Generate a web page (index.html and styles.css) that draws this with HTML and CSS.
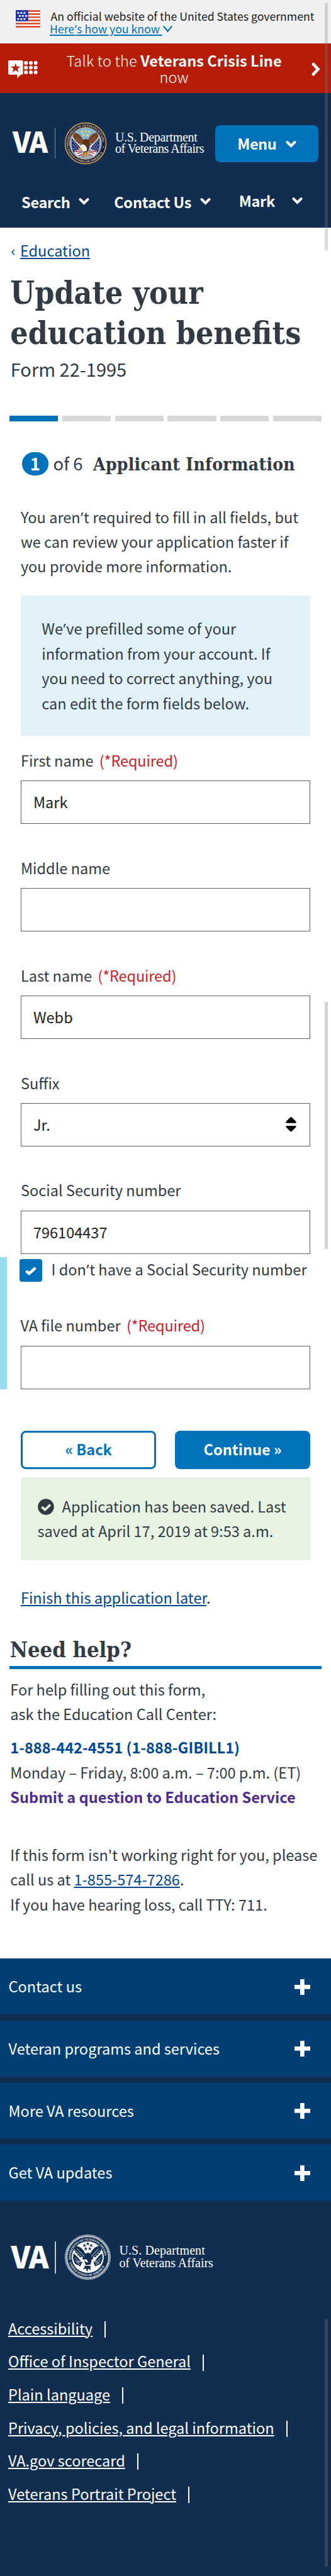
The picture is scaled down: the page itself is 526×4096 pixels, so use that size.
FILE: index.html
```
<!DOCTYPE html>
<html lang="en">
<head>
<meta charset="utf-8">
<title>Update your education benefits</title>
<link rel="stylesheet" href="styles.css">
</head>
<body>
<svg class="defs" width="0" height="0">
  <defs>
    <path id="arc-top" d="M-26.6 4A26.9 26.9 0 1 1 26.6 4"/>
    <path id="arc-bottom" d="M-29.2 9A30.6 30.6 0 0 0 29.2 9"/>
    <path id="star" d="M0-3L.7-1H2.9L1.1.3 1.8 2.4 0 1.1-1.8 2.4-1.1.3-2.9-1H-.7Z"/>
    <path id="wing" d="M-2-3C-5-6-6-12-12-15L-19-18-18-14-21-15-19-11-21-11-18-8-19-7-15-5-16-3-12-2-13 0-8 0-8 3-3 4Z"/>
    <symbol id="chevron" viewBox="0 0 17 12"><path d="M2.5 3L8.5 9L14.5 3" fill="none" stroke="currentColor" stroke-width="4" stroke-linecap="round"/></symbol>
  </defs>
</svg>

<div class="scroll scroll-a"></div>
<div class="scroll scroll-b"></div>
<div class="scroll scroll-c"></div>

<div class="gov">
  <svg class="flag" viewBox="0 0 40 28">
    <path fill="#fff" d="M0 0h40v28H0z"/>
    <path fill="#dc3e1f" d="M0 0h40v2.6H0zM0 5.1h40v2.5H0zM0 10.1h40v2.5H0zM0 15.2h40v2.5H0zM0 20.3h40v2.5H0zM0 25.4h40V28H0z"/>
    <path fill="#1e34b1" d="M0 0h20v17.8H0z"/>
    <path fill="#fff" d="M2.5 3h3v2.6h-3zM7.5 3h3v2.6h-3zM12.5 3h3v2.6h-3zM5 8h3v2.6H5zM10 8h3v2.6h-3zM15 8h3v2.6h-3zM2.5 12.9h3v2.6h-3zM7.5 12.9h3v2.6h-3zM12.5 12.9h3v2.6h-3z"/>
  </svg>
  <div>
    <div>An official website of the United States government</div>
    <a class="gov-link">Here<span class="apos">’</span>s how you know </a><svg class="gov-chev" viewBox="0 0 17 13"><path d="M1.2 1.5L8.5 10.5L15.8 1.5" fill="none" stroke="#0071bb" stroke-width="2.3"/></svg>
  </div>
</div>

<div class="crisis">
  <svg class="crisis-icon" viewBox="0 0 47 29">
    <path fill="#fff" d="M2 0H21.500Q23.500 0 23.500 2V20.500Q23.500 22.700 21.500 22.700H19.800L14.500 28.500V22.700H2Q0 22.700 0 20.500V2Q0 0 2 0Z"/>
    <path fill="#b51d09" d="M11.700 4.500L13.600 9.700H19.700L14.900 13.200 16.700 18.900 11.700 15.500 6.700 18.900 8.500 13.200 3.700 9.700H9.800Z"/>
    <g fill="#fff"><circle cx="28.200" cy="4" r="3"/><circle cx="36" cy="4" r="3"/><circle cx="43.700" cy="4" r="3"/><circle cx="28.200" cy="11.500" r="3"/><circle cx="36" cy="11.500" r="3"/><circle cx="43.700" cy="11.500" r="3"/><circle cx="28.200" cy="19" r="3"/><circle cx="36" cy="19" r="3"/><circle cx="43.700" cy="19" r="3"/></g>
  </svg>
  <p class="crisis-text"><span class="light">Talk to the</span> <b class="crisis-line">Veterans Crisis Line</b><br>now</p>
  <svg class="crisis-arrow" viewBox="0 0 14 22"><path d="M3 3L10.300 11L3 19" fill="none" stroke="#fff" stroke-width="4.800" stroke-linecap="round"/></svg>
</div>

<header class="header">
  <div class="brand-row">
    <span class="va">VA</span><span class="divider"></span>
    <svg class="seal" viewBox="-34 -34 68 68">
      <circle r="33.800" fill="#1c1d4a"/>
      <circle r="32.500" fill="none" stroke="#d8b75a" stroke-width="1.400"/>
      <circle r="25.300" fill="#80b3d6" stroke="#d8b75a" stroke-width="1"/>
      <g fill="#e8cf7c" class="seal-text">
        <text textLength="86" lengthAdjust="spacingAndGlyphs"><textPath href="#arc-top">DEPARTMENT OF VETERANS AFFAIRS</textPath></text>
        <text textLength="71" lengthAdjust="spacingAndGlyphs"><textPath href="#arc-bottom">UNITED STATES OF AMERICA</textPath></text>
      </g>
      <path fill="#2a2f68" d="M-22-9L-8 6-13 17-20 13-22 3ZM22-9L8 6 13 17 20 13 22 3Z"/>
      <path stroke="#d6dbea" stroke-width="1.300" stroke-dasharray="1.300 2" fill="none" d="M-20-4L-11 8M-20 2L-12 12M-19 8L-14 14M20-4L11 8M20 2L12 12M19 8L14 14"/>
      <path stroke="#eceff4" stroke-width="1.400" d="M-22-10L-7 7M22-10L7 7"/>
      <path fill="#fff" d="M-18 13L-8 9-5 17-12 22ZM18 13L8 9 5 17 12 22Z"/>
      <path stroke="#b5303c" stroke-width="1.600" fill="none" d="M-17 13L-6 12M-14 16L-6 14M-12 20L-5 17M17 13L6 12M14 16L6 14M12 20L5 17"/>
      <use href="#wing" fill="#704020"/><use href="#wing" fill="#704020" transform="scale(-1 1)"/>
      <path stroke="#a8744a" stroke-width=".8" fill="none" d="M-16-13L-5-1M-16-9L-6 1M16-13L5-1M16-9L6 1"/>
      <path fill="#5c3218" d="M-4-5Q0-9 5-5Q8 3 4 13L-3 15Q-7 5-4-5Z"/>
      <path fill="#f5f1e8" d="M-9 6Q-7 0-2 2Q3 6 2 12L-4 13-6 9Z"/>
      <path fill="#dfa928" d="M-11 8L-7 6-6 10-10 11ZM-4 15L-1 25 1 16 3 23 5 14Z"/>
      <path stroke="#b5303c" stroke-width="1" fill="none" d="M-2 14L-4 23M2 14L0 21"/>
      <g fill="#f2d75e"><use href="#star" x="0" y="-21.500" transform="scale(.9)"/><use href="#star" x="-5.500" y="-18"/><use href="#star" x="5.500" y="-18"/><use href="#star" x="-3" y="-13"/><use href="#star" x="3" y="-13"/></g>
      <circle cx="-28.500" cy="6" r=".9" fill="#e8cf7c"/><circle cx="28.500" cy="6" r=".9" fill="#e8cf7c"/>
    </svg>
    <div class="dept">U.S. Department<br><span class="dept-two">of Veterans Affairs</span></div>
    <button class="menu">Menu <svg class="chev"><use href="#chevron"/></svg></button>
  </div>
  <nav class="nav">
    <span class="nav-item">Search <svg class="chev"><use href="#chevron"/></svg></span>
    <span class="nav-item nav-contact">Contact Us <svg class="chev"><use href="#chevron"/></svg></span>
    <span class="nav-item nav-user">Mark <svg class="chev"><use href="#chevron"/></svg></span>
  </nav>
</header>

<main class="main">
  <div class="crumb"><span class="crumb-mark">‹</span><a class="link">Education</a></div>
  <h1 class="title">Update your<br>education benefits</h1>
  <p class="subtitle">Form 22-1995</p>
  <div class="progress"><i class="seg done"></i><i class="seg"></i><i class="seg"></i><i class="seg"></i><i class="seg"></i><i class="seg"></i></div>

  <div class="form">
    <div class="step"><span class="pill">1</span><span class="of">of 6</span><h2 class="step-title">Applicant Information</h2></div>
    <p class="intro">You aren<span class="apos">’</span>t required to fill in all fields, but<br>we can review your application faster if<br>you provide more information.</p>
    <div class="prefill">We<span class="apos">’</span>ve prefilled some of your<br>information from your account. If<br>you need to correct anything, you<br>can edit the form fields below.</div>

    <div class="field first"><label class="label">First name <span class="req">(*Required)</span></label><div class="input">Mark</div></div>
    <div class="field"><label class="label">Middle name</label><div class="input"></div></div>
    <div class="field"><label class="label">Last name <span class="req">(*Required)</span></label><div class="input">Webb</div></div>
    <div class="field"><label class="label">Suffix</label><div class="input select">Jr.<svg class="sort" viewBox="0 0 17 24"><path d="M8.500 0Q9.500 0 16.500 7.500V9.700H.5V7.500Q7.500 0 8.500 0ZM.5 14.300H16.500V16Q9.500 23.500 8.500 23.500Q7.500 23.500 .5 16Z"/></svg></div></div>
    <div class="field"><label class="label">Social Security number</label><div class="input">796104437</div></div>
    <div class="expand">
      <div class="check-row"><span class="box"><svg viewBox="0 0 20 15" width="20" height="15"><path d="M2.500 7.800L7.300 12L17.500 2.800" fill="none" stroke="#fff" stroke-width="4.400"/></svg></span><span class="check-text">I don<span class="apos">’</span>t have a Social Security number</span></div>
      <div class="field file"><label class="label">VA file number <span class="req">(*Required)</span></label><div class="input"></div></div>
    </div>
    <div class="buttons"><button class="btn ghost">« Back</button><button class="btn solid">Continue »</button></div>
    <div class="saved"><svg class="saved-icon" viewBox="0 0 26 26"><circle cx="13" cy="13" r="12.800" fill="#323a45"/><path d="M6.500 13.200L11.500 17.700L20 9.500" fill="none" stroke="#e7f4e4" stroke-width="3.600"/></svg>Application has been saved. Last<br>saved at April 17, 2019 at 9:53 a.m.</div>
    <p class="finish"><a class="link">Finish this application later</a>.</p>
  </div>

  <h2 class="help-title">Need help?</h2>
  <p class="help">For help filling out this form,<br>ask the Education Call Center:</p>
  <p class="help contact"><b class="blue">1-888-442-4551 (1-888-GIBILL1)</b><br>Monday – Friday, 8:00 a.m. – 7:00 p.m. (ET)<br><b class="purple">Submit a question to Education Service</b></p>
  <p class="help trouble">If this form isn't working right for you, please<br>call us at <a class="link">1-855-574-7286</a>.<br>If you have hearing loss, call TTY: 711.</p>
</main>

<footer class="footer">
  <div class="panels">
    <div class="panel">Contact us<i class="plus"></i></div>
    <div class="panel">Veteran programs and services<i class="plus"></i></div>
    <div class="panel">More VA resources<i class="plus"></i></div>
    <div class="panel">Get VA updates<i class="plus"></i></div>
  </div>
  <div class="brand-row foot-brand">
    <span class="va">VA</span><span class="divider"></span>
    <svg class="seal" viewBox="-34 -34 68 68" preserveAspectRatio="none">
      <circle r="33.500" fill="none" stroke="#fff" stroke-width=".7"/>
      <circle r="31.300" fill="none" stroke="#fff" stroke-width="2.500" stroke-dasharray="1.500 .7"/>
      <circle r="23.600" fill="#fff"/>
      <g fill="#fff" class="seal-text">
        <g transform="scale(.93)"><text textLength="86" lengthAdjust="spacingAndGlyphs"><textPath href="#arc-top">DEPARTMENT OF VETERANS AFFAIRS</textPath></text>
        <text textLength="71" lengthAdjust="spacingAndGlyphs"><textPath href="#arc-bottom">UNITED STATES OF AMERICA</textPath></text></g>
      </g>
      <g fill="#112e51">
        <use href="#wing"/><use href="#wing" transform="scale(-1 1)"/>
        <path d="M-4-5Q0-8 5-5Q7 3 4 11L-3 12Q-7 5-4-5ZM-21-6L-8 7-11 14-19 10-22 2ZM21-6L8 7 11 14 19 10 22 2ZM-4 13L-7 19-3 17-1 22 1 17 4 20 4 13Z"/>
        <use href="#star" y="-20"/><use href="#star" x="-5" y="-17.500"/><use href="#star" x="5" y="-17.500"/><use href="#star" x="-3" y="-12.500"/><use href="#star" x="3" y="-12.500"/>
      </g>
      <path stroke="#fff" stroke-width=".8" fill="none" d="M-16-13L-5-1M-18-10L-7 1M16-13L5-1M18-10L7 1M-19 1L-11 9M-18 5L-12 12M19 1L11 9M18 5L12 12M-15-1L-9 8M15-1L9 8M-7 4L-4 10M-12 6h4M9 6h4M-16 7h4M13 9h4"/>
      <path stroke="#fff" stroke-width="1.500" fill="none" d="M-21-8L-7 7M21-8L7 7"/>
      <path fill="#fff" d="M-6 4L-2 3 1 8-3 7Z"/>
    </svg>
    <div class="dept">U.S. Department<br><span class="dept-two">of Veterans Affairs</span></div>
  </div>
  <ul class="links">
    <li class="link-row"><a class="foot-link">Accessibility</a></li>
    <li class="link-row"><a class="foot-link">Office of Inspector General</a></li>
    <li class="link-row"><a class="foot-link">Plain language</a></li>
    <li class="link-row"><a class="foot-link">Privacy, policies, and legal information</a></li>
    <li class="link-row"><a class="foot-link">VA.gov scorecard</a></li>
    <li class="link-row"><a class="foot-link">Veterans Portrait Project</a></li>
  </ul>
</footer>
</body>
</html>
```
FILE: styles.css
```
* { box-sizing: border-box; }
body, h1, h2, p, ul { margin: 0; padding: 0; }
body {
  position: relative;
  width: 526px;
  height: 4096px;
  overflow: hidden;
  background: #fff;
  color: #323a45;
  font-family: "Noto Sans CJK SC", "Open Sans", sans-serif;
  font-size: 23.55px;
  line-height: 39.4px;
  display: flex;
  flex-direction: column;
  white-space: nowrap;
}
svg { display: block; flex: none; }
button { font: inherit; margin: 0; padding: 0; cursor: pointer; }
.defs { position: absolute; }
.apos { font-family: "Noto Sans", sans-serif; line-height: 1; padding: 0 .6px; }

/* scroll indicators float above the page edge */
.scroll { position: absolute; left: 516.3px; width: 4.8px; z-index: 2; }
.scroll-a { top: 5px; height: 393px; background: rgba(125, 125, 125, .28); }
.scroll-b { top: 1593px; height: 393px; background: #d3d3d3; }
.scroll-c { top: 3688px; height: 393px; background: #33475f; }

.gov {
  height: 69px;
  flex: none;
  display: flex;
  gap: 16.500px;
  padding: 15.8px 0 0 24.5px;
  background: #f0f0f0;
  color: #212121;
  font-size: 17.66px;
  line-height: 19.7px;
}
.gov > div { padding-top: .5px; }
.flag { width: 39.5px; height: 28px; }
.gov-link { color: #0071bb; text-decoration: underline; text-decoration-thickness: 1.6px; text-underline-offset: 2px; white-space: pre; margin-left: -1.500px; }
.gov-chev { display: inline-block; width: 17px; height: 12px; vertical-align: 1px; }

.crisis {
  height: 79px;
  flex: none;
  display: flex;
  align-items: flex-start;
  justify-content: space-between;
  padding: 0 17px 0 13px;
  background: #b51d09;
  color: #fff;
  line-height: 26.4px;
}
.crisis-icon { width: 47px; height: 29px; margin-top: 26.500px; }
.crisis-text { margin-left: 31px; padding: 14px 0 0; text-align: center; font-weight: 300; }
.crisis-line { font-weight: 700; }
.light { letter-spacing: .2px; }
.crisis-arrow { width: 14px; height: 22px; margin: 29.500px 0 0 33px; }

.header { height: 213.800px; flex: none; background: #112e51; color: #fff; }
.brand-row { display: flex; padding: 46px 0 0 20px; height: 114px; }
.va { width: 66.500px; font-size: 45px; font-weight: 900; line-height: 60px; letter-spacing: -1.500px; }
.divider { width: 1.500px; height: 49px; margin-top: 9px; background: #7f8ea3; }
.seal { width: 68px; height: 68px; margin: -.5px 0 0 14px; }
.seal-text { font: bold 4.700px "Liberation Serif", serif; }
.dept { margin: 15px 0 0 13px; width: 159px; font: 20px/18.300px "Liberation Serif", serif; letter-spacing: -.3px; }
.dept-two { letter-spacing: -.49px; }
.menu {
  display: flex; align-items: center; justify-content: center; gap: 14.500px;
  width: 164px; height: 59px; margin-top: 5px;
  border: 0; border-radius: 8px;
  background: #0071bb; color: #fff; font-weight: 700; letter-spacing: -.5px;
}
.chev { width: 17px; height: 12px; }
.nav { display: flex; padding: 39.500px 0 0 34px; font-weight: 700; letter-spacing: -.3px; }
.nav-item { display: flex; align-items: center; gap: 13.500px; }
.nav-item .chev { margin-bottom: 1.500px; }
.nav-contact { margin-left: 39px; letter-spacing: -.2px; }
.nav-user { margin: -2.800px 0 0 45px; gap: 27px; }

.main { flex: none; height: 2752.400px; padding: 17px 14.800px 0; }
.crumb { display: flex; padding-left: 2.800px; }
.crumb-mark { width: 14.300px; color: #004795; }
.link { color: #004795; text-decoration: underline; text-decoration-thickness: 1.500px; text-underline-offset: 2px; }
.title { margin: 15.500px 0 0 1.500px; font: bold 49.600px/64.500px "DejaVu Serif Condensed", "DejaVu Serif", serif; }
.subtitle { margin: .9px 0 0 2px; font-size: 29px; line-height: 44px; }
.progress { display: flex; gap: 6.700px; margin-top: 53.300px; width: 496.500px; }
.seg { flex: 1; height: 9.500px; background: #d6d7d9; }
.done { background: #0071bb; }

.form { padding: 0 18px 0 18.100px; }
.step { display: flex; align-items: baseline; margin-top: 49px; height: 36.700px; font-size: 27.500px; line-height: 34px; }
.pill { flex: none; width: 42.500px; height: 36.700px; margin-left: 1.700px; border-radius: 18.400px; background: #0071bb; color: #fff; font-weight: 700; text-align: center; }
.of { flex: none; margin-left: 7.500px; width: 63.500px; }
.step-title { font: bold 28px/33px "DejaVu Serif Condensed", "DejaVu Serif", serif; letter-spacing: .3px; }
.intro { margin-top: 46.600px; }
.prefill { margin-top: 25.800px; height: 223.500px; padding: 33.700px 33.400px 0; background: #e1f1f8; }
.field { margin-top: 50.300px; }
.first { margin-top: 19.700px; }
.label { display: block; margin-bottom: 12px; }
.req { margin-left: 4px; color: #cd2026; letter-spacing: -.15px; }
.input { height: 69.200px; padding-left: 19px; border: 1.600px solid #5b616b; color: #212121; line-height: 66.500px; background: #fff; }
.select { display: flex; justify-content: space-between; align-items: center; padding-right: 21.500px; }
.sort { width: 17px; height: 24px; margin-bottom: 2px; fill: #000; }

.expand { margin: 4.900px 0 0 -32.900px; padding-left: 21.500px; border-left: 11.400px solid #9bdaf1; height: 210.500px; }
.check-row { display: flex; align-items: center; height: 38.200px; margin-left: -2px; }
.check-text { padding-top: 2px; }
.box { display: flex; align-items: center; justify-content: center; width: 36.400px; height: 36px; margin: 4px 14.600px 0 0; border-radius: 4px; background: #0071bb; }
.file { margin-top: 51px; }

.buttons { display: flex; gap: 29.500px; margin-top: 65.700px; }
.btn { flex: 1; height: 61px; padding-bottom: 1px; border-radius: 8px; border: 3.200px solid #0071bb; font-weight: 700; }
.ghost { background: #fff; color: #0071bb; }
.solid { background: #0071bb; color: #fff; }
.saved { margin-top: 13.100px; height: 131.400px; padding: 26.800px 26.700px 0; background: #e7f4e4; }
.saved-icon { display: inline-block; width: 26px; height: 26px; margin-right: 13px; vertical-align: -4px; }
.finish { margin-top: 40px; }

.help-title { margin-top: 43px; padding-left: 1px; height: 50.600px; border-bottom: 5px solid #0071bb; font: bold 34.300px/40px "DejaVu Serif Condensed", "DejaVu Serif", serif; }
.help { margin: 13.200px 0 0 1.500px; }
.contact { margin-top: 13.700px; }
.trouble { margin-top: 52.400px; }
.blue { color: #004795; }
.purple { color: #4c2c92; }

.footer { flex: 1; background: #112e51; color: #fff; }
.panels { display: flex; flex-direction: column; gap: 9.900px; }
.panel { display: flex; align-items: center; justify-content: space-between; height: 88.800px; padding: 1px 32.800px 0 13.500px; background: #003e73; }
.plus { width: 25px; height: 25px; background: linear-gradient(#fff, #fff) center / 6.700px 100% no-repeat, linear-gradient(#fff, #fff) center / 100% 6.700px no-repeat; }
.foot-brand { padding: 54px 0 0 17.400px; height: 177px; }
.foot-brand .va { width: 70px; font-size: 48px; line-height: 66px; }
.foot-brand .divider { height: 51px; margin-top: 11px; background: #c3cad3; }
.foot-brand .seal { width: 73px; height: 72px; margin: 0 0 0 14px; }
.foot-brand .dept { margin: 14.500px 0 0 13.500px; line-height: 20px; letter-spacing: .1px; }
.foot-brand .dept-two { letter-spacing: -.05px; }
.links { list-style: none; }
.link-row { display: flex; align-items: center; height: 52.650px; padding-left: 13px; }
.foot-link { text-decoration: underline; text-decoration-thickness: 1.500px; text-underline-offset: 2px; }
.link-row::after { content: ""; width: 2px; height: 26px; margin: 3px 0 0 19px; background: #fff; }
```
